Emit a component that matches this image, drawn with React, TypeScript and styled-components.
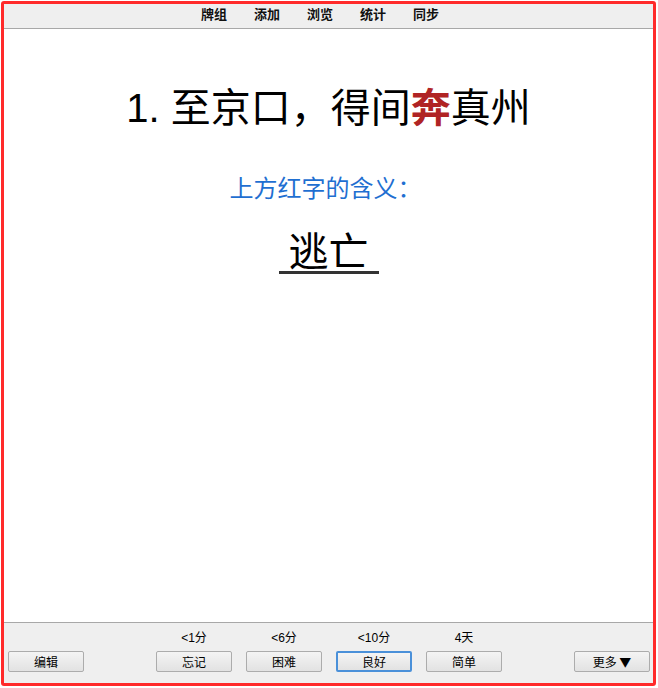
import React from "react";
import styled, { createGlobalStyle } from "styled-components";

const Global = createGlobalStyle`
  html, body { margin: 0; padding: 0; background: #ffffff; }
  body { font-family: "Liberation Sans", "Noto Sans CJK SC", sans-serif; }
`;

const Frame = styled.div`
  box-sizing: border-box;
  width: 655px;
  height: 685px;
  margin: 1px 0 0 1px;
  border: 3px solid #ff2a2a;
  border-radius: 3px;
  display: flex;
  flex-direction: column;
  overflow: hidden;
`;

const Toolbar = styled.nav`
  box-sizing: border-box;
  height: 25px;
  flex: none;
  background: #efefef;
  border-bottom: 1px solid #a8a8a8;
  display: flex;
  justify-content: center;
  align-items: center;
  gap: 27px;
  padding: 0 17px 4px 0;
`;

const MenuItem = styled.span`
  font-family: "Noto Sans CJK SC", sans-serif;
  font-weight: 700;
  font-size: 13px;
  color: #111;
  line-height: 14px;
`;

const Main = styled.main`
  flex: 1;
  background: #fff;
  display: flex;
  flex-direction: column;
  align-items: center;
  padding-top: 55px;
`;

const Question = styled.div`
  font-family: "Liberation Sans", "Noto Sans CJK SC", sans-serif;
  font-size: 40px;
  line-height: 48px;
  color: #000;
`;

const Highlight = styled.b`
  color: #b02424;
  font-weight: 700;
`;

const Prompt = styled.div`
  margin-top: 41px;
  font-family: "Noto Sans CJK SC", sans-serif;
  font-size: 24px;
  line-height: 28px;
  color: #1f6fd1;
  padding-right: 6px;
`;

const Answer = styled.div`
  margin-top: 26px;
  font-family: "Noto Sans CJK SC", sans-serif;
  font-size: 40px;
  line-height: 44px;
  color: #000;
  padding: 0 10px;
  border-bottom: 3px solid #333;
`;

const Footer = styled.footer`
  flex: none;
  background: #efefef;
  border-top: 1px solid #a8a8a8;
  padding: 8px 3px 11px 4px;
  display: grid;
  grid-template-columns: 1fr auto 1fr;
  align-items: end;
`;

const Side = styled.div<{ $align: "start" | "end" }>`
  display: flex;
  justify-content: ${(p) => (p.$align === "start" ? "flex-start" : "flex-end")};
`;

const AnswerGroup = styled.div`
  display: flex;
  gap: 14px;
`;

const AnswerCol = styled.div`
  display: flex;
  flex-direction: column;
  align-items: center;
  gap: 6px;
`;

const Due = styled.span`
  font-family: "Liberation Sans", "Noto Sans CJK SC", sans-serif;
  font-size: 12px;
  line-height: 14px;
  color: #000;
`;

const Button = styled.button<{ $focused?: boolean }>`
  box-sizing: border-box;
  width: 76px;
  height: 21px;
  margin: 0;
  padding: 0;
  font-family: "Noto Sans CJK SC", sans-serif;
  font-size: 12px;
  line-height: 14px;
  color: #000;
  background: linear-gradient(#f4f4f4, #e2e2e2);
  border: ${(p) => (p.$focused ? "2px solid #4a90d9" : "1px solid #acacac")};
  border-radius: 2px;
  cursor: pointer;
`;

const answers = [
  { due: "<1分", label: "忘记" },
  { due: "<6分", label: "困难" },
  { due: "<10分", label: "良好", focused: true },
  { due: "4天", label: "简单" },
];

export default function App() {
  return (
    <>
      <Global />
      <Frame>
        <Toolbar>
          {["牌组", "添加", "浏览", "统计", "同步"].map((t) => (
            <MenuItem key={t}>{t}</MenuItem>
          ))}
        </Toolbar>
        <Main>
          <Question>
            1. 至京口，得间<Highlight>奔</Highlight>真州
          </Question>
          <Prompt>上方红字的含义：</Prompt>
          <Answer>逃亡</Answer>
        </Main>
        <Footer>
          <Side $align="start">
            <Button>编辑</Button>
          </Side>
          <AnswerGroup>
            {answers.map((a) => (
              <AnswerCol key={a.label}>
                <Due>{a.due}</Due>
                <Button $focused={a.focused}>{a.label}</Button>
              </AnswerCol>
            ))}
          </AnswerGroup>
          <Side $align="end">
            <Button>更多 ▼</Button>
          </Side>
        </Footer>
      </Frame>
    </>
  );
}
